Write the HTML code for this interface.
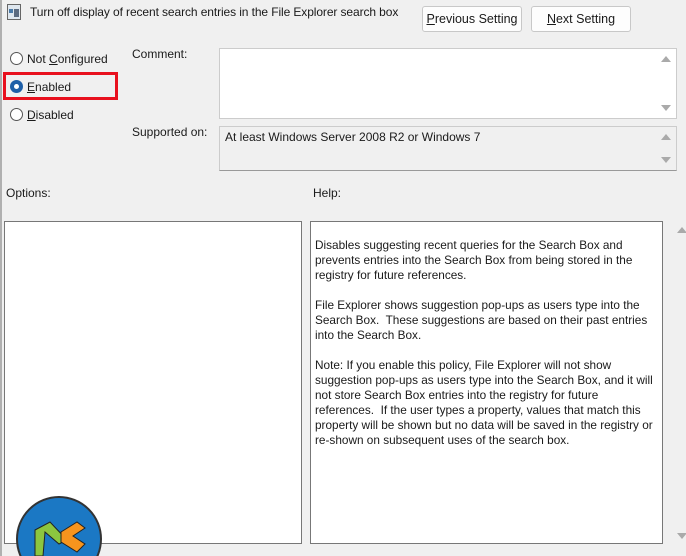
<!DOCTYPE html>
<html><head><meta charset="utf-8"><style>
*{margin:0;padding:0;box-sizing:border-box}
body{width:686px;height:556px;overflow:hidden;background:#f0f0f0;font-family:"Liberation Sans",sans-serif;font-size:12px;color:#1a1a1a;position:relative}
.a{position:absolute}
.btn{position:absolute;top:6px;height:26px;border:1px solid #c8c8c8;background:#fdfdfd;border-radius:3px;text-align:center;line-height:24px;font-size:12.5px}
.radio{position:absolute;width:13px;height:13px;border:1px solid #555;border-radius:50%;background:#fff}
.box{position:absolute;background:#fff;border:1px solid #8a8a8a}
.up,.dn{position:absolute;width:0;height:0;border-left:5px solid transparent;border-right:5px solid transparent}
.up{border-bottom:6px solid #aaa}.dn{border-top:6px solid #aaa}
u{text-decoration:underline}
</style></head><body>
<div class="a" style="left:0;top:0;width:2px;height:556px;background:#b0b0b0"></div>
<div class="a" style="left:7px;top:4px;width:14px;height:16px;border:1px solid #666;background:#dfe7ef"></div>
<div class="a" style="left:9px;top:9px;width:4px;height:4px;background:#4a7aa8"></div>
<div class="a" style="left:14px;top:9px;width:5px;height:8px;background:#5a6a80"></div>
<div class="a" style="left:30px;top:5px;font-size:12px;letter-spacing:-0.1px">Turn off display of recent search entries in the File Explorer search box</div>
<div class="btn" style="left:422px;width:100px"><u>P</u>revious Setting</div>
<div class="btn" style="left:531px;width:100px"><u>N</u>ext Setting</div>

<div class="radio" style="left:10px;top:52px"></div>
<div class="a" style="left:27px;top:52px">Not <u>C</u>onfigured</div>
<div class="a" style="left:3px;top:72px;width:115px;height:28px;border:3px solid #e8101e"></div>
<div class="a" style="left:10px;top:80px;width:13px;height:13px;border-radius:50%;background:#1e5fa8"></div>
<div class="a" style="left:14px;top:84px;width:5px;height:5px;border-radius:50%;background:#fff"></div>
<div class="a" style="left:27px;top:80px"><u>E</u>nabled</div>
<div class="radio" style="left:10px;top:108px"></div>
<div class="a" style="left:27px;top:108px"><u>D</u>isabled</div>

<div class="a" style="left:132px;top:47px">Comment:</div>
<div class="box" style="left:219px;top:48px;width:458px;height:71px;border-color:#ccc"></div>
<div class="up" style="left:661px;top:56px"></div><div class="dn" style="left:661px;top:105px"></div>
<div class="a" style="left:132px;top:125px">Supported on:</div>
<div class="box" style="left:219px;top:126px;width:458px;height:45px;background:#f0f0f0;border-color:#ccc;border-bottom-color:#999"></div>
<div class="a" style="left:225px;top:130px">At least Windows Server 2008 R2 or Windows 7</div>
<div class="up" style="left:661px;top:134px"></div><div class="dn" style="left:661px;top:157px"></div>

<div class="a" style="left:6px;top:186px">Options:</div>
<div class="a" style="left:313px;top:186px">Help:</div>
<div class="box" style="left:4px;top:221px;width:298px;height:323px;border-color:#777"></div>
<div class="box" style="left:310px;top:221px;width:353px;height:323px;border-color:#777"></div>
<div class="up" style="left:677px;top:227px"></div><div class="dn" style="left:677px;top:533px"></div>
<div class="a" style="left:315px;top:238px;width:345px;line-height:15px;font-size:11.8px">Disables suggesting recent queries for the Search Box and prevents entries into the Search Box from being stored in the registry for future references.<br><br>File Explorer shows suggestion pop-ups as users type into the Search Box.&nbsp; These suggestions are based on their past entries into the Search Box.<br><br>Note: If you enable this policy, File Explorer will not show suggestion pop-ups as users type into the Search Box, and it will not store Search Box entries into the registry for future references.&nbsp; If the user types a property, values that match this property will be shown but no data will be saved in the registry or re-shown on subsequent uses of the search box.</div>

<svg class="a" style="left:15px;top:496px" width="90" height="60" viewBox="0 0 90 60">
<circle cx="44" cy="43" r="42" fill="#1b78c4" stroke="#333" stroke-width="2"/>
<polygon points="20,34 35,26 52,44 44,48 30,36 28,60 20,60" fill="#8cc63f" stroke="#222" stroke-width="1"/>
<polygon points="46,36 62,26 70,32 58,40 70,48 62,56 46,46" fill="#f7941d" stroke="#222" stroke-width="1"/>
</svg>
</body></html>
